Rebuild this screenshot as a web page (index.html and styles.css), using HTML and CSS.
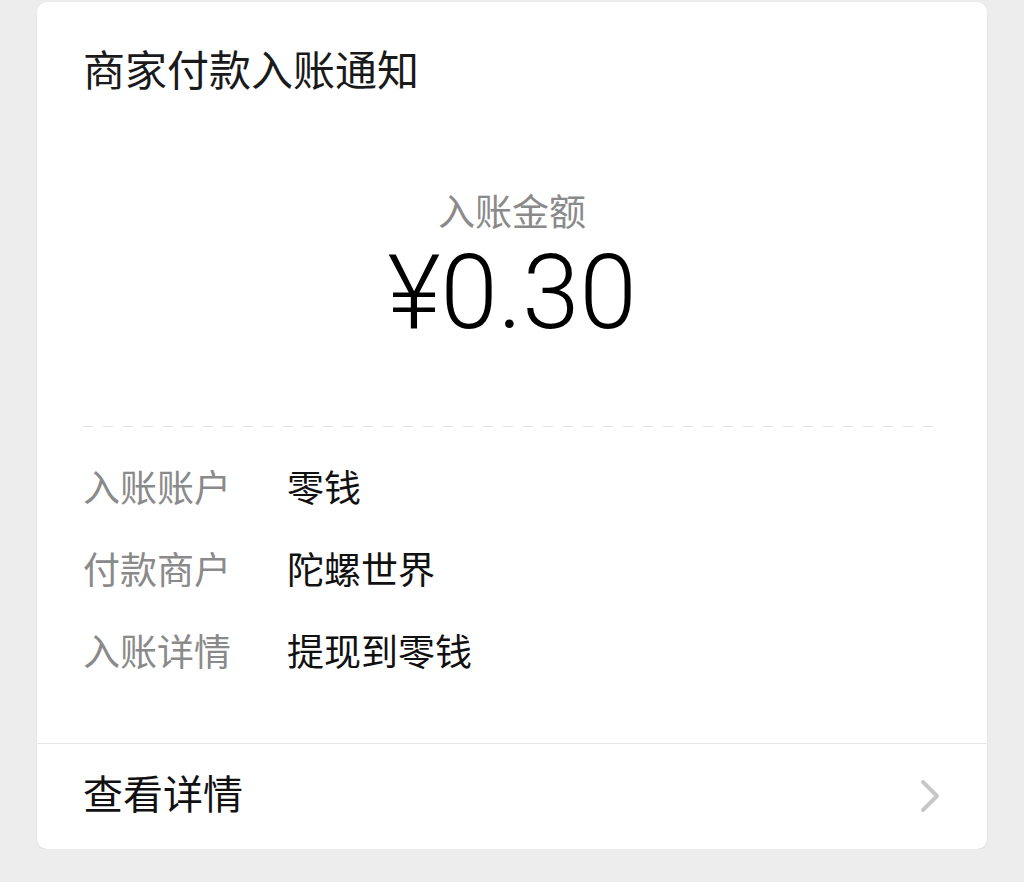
FILE: index.html
```html
<!DOCTYPE html>
<html lang="zh-CN">

<head>
    <meta charset="UTF-8">
    <meta name="viewport" content="width=device-width, initial-scale=1.0">
    <title>商家付款入账通知</title>
    <link rel="stylesheet" href="styles.css">
</head>

<body>
    <div class="card">
        <div class="card_title">商家付款入账通知</div>

        <div class="amount">
            <div class="amount_label">入账金额</div>
            <div class="amount_value">¥0.30</div>
        </div>

        <div class="dash_line"></div>

        <ul class="info_list">
            <li>
                <span class="info_label">入账账户</span>
                <span class="info_value">零钱</span>
            </li>
            <li>
                <span class="info_label">付款商户</span>
                <span class="info_value">陀螺世界</span>
            </li>
            <li>
                <span class="info_label">入账详情</span>
                <span class="info_value">提现到零钱</span>
            </li>
        </ul>

        <div class="card_footer">
            <span>查看详情</span>
            <svg class="arrow" width="24" height="34" viewBox="0 0 24 34">
                <polyline points="4,3 18,17 4,31" fill="none" stroke="#c7c7c9" stroke-width="4" stroke-linecap="round" stroke-linejoin="round" />
            </svg>
        </div>
    </div>
</body>

</html>
```

FILE: styles.css
```css
* {
    padding: 0;
    margin: 0;
}

ul,
li {
    list-style: none;
}

body {
    background: #ededed;
    font-family: "Noto Sans CJK SC", "Liberation Sans", sans-serif;
    color: #111;
    padding: 2px 37px 0;
}

.card {
    width: 950px;
    height: 847px;
    background: #fff;
    border-radius: 10px;
    box-shadow: 0 1px 2px rgba(0, 0, 0, 0.08);
    display: flex;
    flex-direction: column;
}

.card_title {
    padding: 36px 46px 0;
    font-size: 42px;
    line-height: 60px;
    color: #1a1a1a;
}

.amount {
    margin-top: 87px;
    text-align: center;
}

.amount_label {
    font-size: 37px;
    line-height: 50px;
    color: #8a8a8a;
}

.amount_value {
    margin-top: 8px;
    font-family: Roboto, "Liberation Sans", sans-serif;
    font-weight: 300;
    font-size: 103px;
    line-height: 100px;
    color: #000;
}

.dash_line {
    margin: 83px 46px 0;
    height: 1px;
    background: repeating-linear-gradient(90deg, #e3e3e3 0, #e3e3e3 10px, transparent 10px, transparent 20px);
}

.info_list {
    margin-top: 18px;
    padding: 0 46px;
}

.info_list>li {
    display: flex;
    font-size: 37px;
    line-height: 82px;
}

.info_label {
    width: 204px;
    color: #8a8a8a;
}

.info_value {
    color: #111;
}

.card_footer {
    margin-top: 52px;
    border-top: 1px solid #e6e6e6;
    height: 104px;
    padding: 0 44px 8px 46px;
    box-sizing: border-box;
    display: flex;
    align-items: center;
    justify-content: space-between;
    font-size: 40px;
    color: #111;
}

.arrow {
    margin-top: 8px;
}
```
